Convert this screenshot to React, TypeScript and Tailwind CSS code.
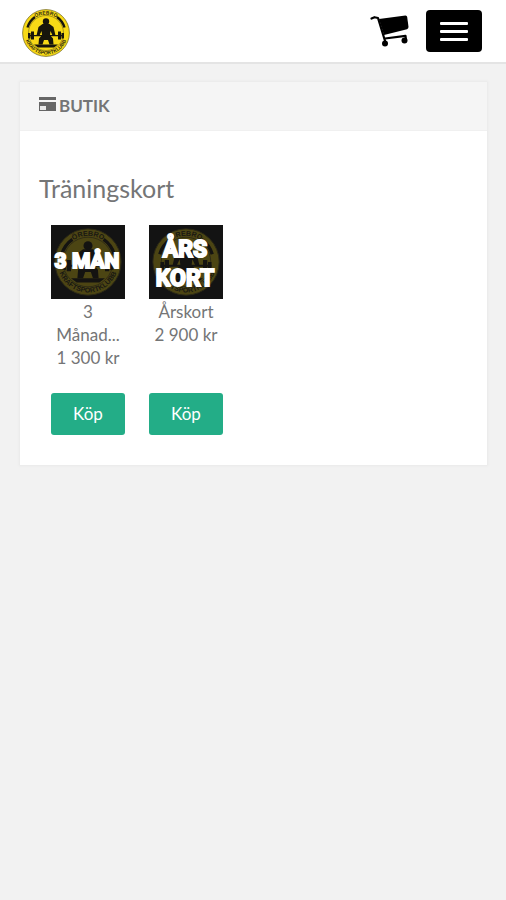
const products = [
  { name: '3 Månadskort', label: ['3', 'Månad...'], lines: ['3 MÅN'], price: '1 300 kr' },
  { name: 'Årskort', label: ['Årskort'], lines: ['ÅRS', 'KORT'], price: '2 900 kr' },
];

function Lifter() {
  return (
    <g>
      <circle cx="24" cy="12.500" r="3.200" />
      <path d="M20.500 15h7l4 3 2 8.500h-3L28.500 22l-.5 4 3 3.500.5 6h-4L26 31h-4l-1.500 4.500h-4l.5-6 3-3.500-.5-4-2 4.500h-3l2-8.500z" />
      <path d="M6 26h36v1.300H6z" />
      <path d="M9 22.500h3v8H9zM6 24h2.500v5.500H6zM36 22.500h3v8h-3zM39.500 24H42v5.500h-2.500z" />
      <path d="M12 35.500h24l-4 3H16z" />
    </g>
  );
}

function Emblem({ id }: { id: string }) {
  return (
    <>
      <defs>
        <path id={`${id}-top`} d="M5.500 24a18.500 18.500 0 0 1 37 0" />
        <path id={`${id}-bottom`} d="M2.500 24a21.500 21.500 0 0 0 43 0" />
      </defs>
      <circle cx="24" cy="24" r="23.400" fill="#f7d916" stroke="#6a601d" strokeWidth=".7" />
      <circle cx="24" cy="24" r="17.500" fill="none" stroke="#6e6318" strokeWidth=".6" />
      <g fill="#2c280f" fontFamily="'Liberation Sans', sans-serif" fontWeight="700" fontSize="5" textAnchor="middle">
        <text><textPath href={`#${id}-top`} startOffset="50%">ÖREBRO</textPath></text>
        <text><textPath href={`#${id}-bottom`} startOffset="50%">KRAFTSPORTKLUBB</textPath></text>
      </g>
      <path d="M5.500 18.500A19.500 19.500 0 0 1 13 8M35 8a19.500 19.500 0 0 1 7.500 10.500" fill="none" stroke="#17150c" strokeWidth="2.400" />
      <g fill="#17150c"><Lifter /></g>
    </>
  );
}

function ProductImage({ id, lines, name }: { id: string; lines: string[]; name: string }) {
  const single = lines.length === 1;
  return (
    <svg viewBox="0 0 74 74" className="block w-full" role="img" aria-label={name}>
      <path fill="#131313" d="M0 0h74v74H0z" />
      <g transform="translate(3 3) scale(1.417)" opacity=".25"><Emblem id={id} /></g>
      <g
        fill="#fff"
        stroke="#fff"
        strokeWidth="2"
        strokeLinejoin="miter"
        strokeMiterlimit="2"
        fontFamily="Roboto, 'Liberation Sans', sans-serif"
        fontWeight="700"
        fontSize={single ? 21 : 23}
        textAnchor="middle"
      >
        {lines.map((line, i) => (
          <text key={line} x="36" y={single ? 43 : 32 + i * 29}>{line}</text>
        ))}
      </g>
    </svg>
  );
}

export default function App() {
  return (
    <div className="min-h-screen bg-[#f2f2f2] font-['Lato',sans-serif] text-[17px] leading-[23px] text-[#747576]">
      <header className="flex h-16 items-center justify-between border-b-2 border-[#e4e4e4] bg-white pr-6 pl-[22px]">
        <a href="#" aria-label="Startsida">
          <svg viewBox="0 0 48 48" className="mt-1 size-12"><Emblem id="logo" /></svg>
        </a>
        <div className="flex items-center gap-4">
          <a href="#" aria-label="Kundvagn">
            <svg viewBox="0 0 40 34" className="h-[34px] w-10" fill="#000">
              <path d="M9 5 35.500 1.500q1.500 0 1.700 1.500L38.500 13q0 1.500-1.500 2.200L14 21z" />
              <path d="M1.500 4.500 4.500 3.200 8 4l7.500 24.500M15 24.500l20.500-2.700.5 4" fill="none" stroke="#000" strokeWidth="2.200" strokeLinecap="round" strokeLinejoin="round" />
              <circle cx="15" cy="29.500" r="3" />
              <circle cx="34.500" cy="26.500" r="3" />
            </svg>
          </a>
          <button type="button" aria-label="Meny" className="flex h-[42px] w-14 flex-col items-center justify-center gap-[5px] rounded-[4px] bg-black">
            <span className="h-[3px] w-7 rounded-[1px] bg-white" />
            <span className="h-[3px] w-7 rounded-[1px] bg-white" />
            <span className="h-[3px] w-7 rounded-[1px] bg-white" />
          </button>
        </div>
      </header>

      <main className="pt-[18px] pr-[19px] pl-5">
        <section className="bg-white shadow-[0_0_2px_1px_#e9e9e9]">
          <h1 className="flex h-[49px] items-center gap-[3px] border-b border-[#f0f0f0] bg-[#f5f5f5] px-[19px] pb-[2px] font-bold">
            <svg viewBox="0 0 17 14" className="-mt-[2px] h-[14px] w-[17px]" fill="#666" aria-hidden="true">
              <path d="M0 0h17v3H0zM0 5h17v9H0z" />
              <path d="M1 9h6v4H1z" fill="#e9e9e9" />
            </svg>
            BUTIK
          </h1>
          <div className="px-[19px] pt-[41px] pb-[30px]">
            <h2 className="text-[25px] leading-8">Träningskort</h2>
            <ul className="mt-[21px] flex gap-6 px-3">
              {products.map((product, i) => (
                <li key={product.name} className="flex w-[74px] flex-col text-center">
                  <ProductImage id={`product-${i}`} lines={product.lines} name={product.name} />
                  <div className="mt-px h-[93px]">
                    {product.label.map((part) => (
                      <p key={part}>{part}</p>
                    ))}
                    <p>{product.price}</p>
                  </div>
                  <button type="button" className="h-[42px] rounded-[3px] bg-[#23ad87] pb-[2px] text-white">Köp</button>
                </li>
              ))}
            </ul>
          </div>
        </section>
      </main>
    </div>
  );
}
